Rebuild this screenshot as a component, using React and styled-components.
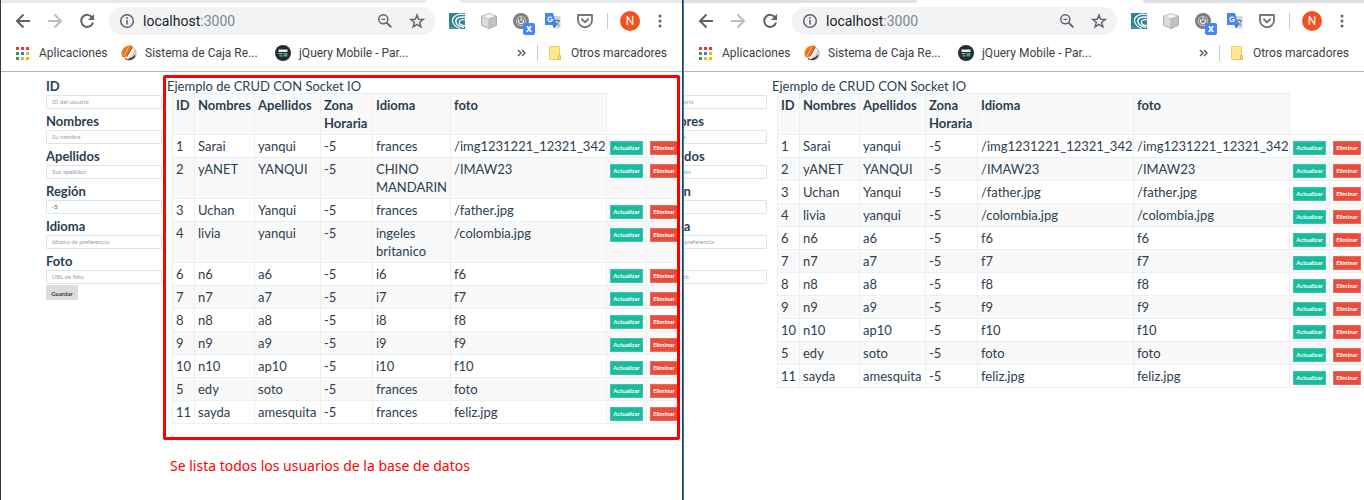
import React, { useId } from 'react';
import styled, { createGlobalStyle } from 'styled-components';

const GlobalStyle = createGlobalStyle`
  *, *::before, *::after { box-sizing: border-box; }
  body { margin: 0; background: #fff; overflow: hidden; }
  button, input { font: inherit; }
`;

const chromeFont = 'Roboto, "Noto Sans", sans-serif';

const Desktop = styled.div`
  display: grid;
  grid-template-columns: 50% 1px 1fr;
  min-height: 100vh;
`;
const Divider = styled.div`
  background: #33373c;
`;
const BrowserWindow = styled.section`
  min-width: 0;
  overflow: hidden;
  border-left: 1px solid ${(p) => p.$edge};
`;

/* Browser chrome */
const TabStrip = styled.div`
  display: flex;
  height: 3px;
`;
const Tabs = styled.div`
  flex: ${(p) => (p.$width ? `0 0 ${p.$width}px` : '1')};
  background: ${(p) => p.$color};
  border-radius: ${(p) => (p.$width ? '0 0 4px 0' : '0 0 0 4px')};
`;
const TabGap = styled.div`
  flex: 0 0 ${(p) => p.$width}px;
`;
const Toolbar = styled.div`
  display: flex;
  align-items: center;
  height: 36px;
  padding: 0 14px;
`;
const IconButton = styled.button`
  display: grid;
  place-items: center;
  position: relative;
  flex: none;
  width: 16px;
  height: 16px;
  padding: 0;
  border: 0;
  background: none;
  color: #5f6368;
  &:disabled { color: #bbbdbf; }
`;
const Navigation = styled.div`
  display: flex;
  gap: 16px;
  margin-right: 14px;
`;
const AddressBar = styled.div`
  display: flex;
  align-items: center;
  gap: 16px;
  flex: 1;
  min-width: 0;
  height: 28px;
  padding: 0 10px;
  border-radius: 14px;
  background: #f1f3f4;
`;
const Address = styled.div`
  flex: 1;
  margin-left: -8px;
  font: 14px/20px ${chromeFont};
  color: #202124;
  white-space: nowrap;
  span { color: #80868b; }
`;
const Extensions = styled.div`
  display: flex;
  align-items: center;
  gap: 16px;
  margin-left: 14px;
`;
const Badge = styled.span`
  position: absolute;
  left: 10px;
  top: 10px;
  width: 12px;
  height: 12px;
  border-radius: 2px;
  background: #4285f4;
  color: #fff;
  font: bold 10px/11px "Noto Sans", sans-serif;
  text-align: center;
`;
const Separator = styled.span`
  flex: none;
  width: 1px;
  height: 16px;
  background: #ccc;
`;
const Profile = styled.div`
  display: flex;
  align-items: center;
  gap: 12px;
  margin-left: 14px;
`;
const Avatar = styled.button`
  width: 20px;
  height: 20px;
  padding: 0;
  border: 0;
  border-radius: 50%;
  background: #f4511e;
  color: #fff;
  font: 12px/20px ${chromeFont};
  text-align: center;
`;
const BookmarksBar = styled.nav`
  display: flex;
  align-items: center;
  height: 33px;
  padding: 0 15px 4px;
  border-bottom: 1px solid #b4b4b4;
  font: 12px/18px ${chromeFont};
  color: #3c4043;
  white-space: nowrap;
`;
const Bookmark = styled.a`
  display: flex;
  align-items: center;
  flex: none;
  gap: 8px;
  width: ${(p) => (p.$width ? `${p.$width}px` : 'auto')};
  color: inherit;
  text-decoration: none;
  svg { flex: none; }
`;
const BookmarkEnd = styled.div`
  display: flex;
  align-items: center;
  gap: 11px;
  margin-left: auto;
`;

/* Page */
const Page = styled.main`
  display: flex;
  align-items: flex-start;
  padding-left: 45px;
  margin-left: ${(p) => -p.$scrolled}px;
  font: 13px/18px Lato, sans-serif;
  color: #2c3e50;
`;
const UserForm = styled.form`
  flex: none;
  width: 116px;
  padding-top: 5px;
`;
const Field = styled.div`
  margin-bottom: 3px;
  &:last-of-type { margin-bottom: 1px; }
`;
const Label = styled.label`
  display: block;
  font-weight: 700;
`;
const TextInput = styled.input`
  display: block;
  width: 100%;
  height: 14px;
  padding: 0 5px;
  border: 1px solid #dce4ec;
  border-radius: 1px;
  background: #fff;
  color: #2c3e50;
  font-size: 6px;
  &::placeholder { color: #95a1a9; opacity: 1; }
`;
const SaveButton = styled.button`
  display: block;
  width: 32px;
  height: 15px;
  padding: 0;
  border: 0;
  border-radius: 1px;
  background: #dcdcdc;
  color: #2c3e50;
  font-size: 6px;
  font-weight: 700;
`;
const ListColumn = styled.div`
  flex: 1;
  min-width: 0;
  margin-left: 1px;
`;
const ListPanel = styled.div`
  position: relative;
  padding: 7px 0 16px 9px;
`;
const Title = styled.div`
  margin-left: -5px;
  line-height: 14px;
  white-space: nowrap;
`;
const Highlight = styled.div`
  position: absolute;
  inset: 3px 2px 0 0;
  border: 3px solid #f00;
  border-radius: 2px;
  pointer-events: none;
`;
const Caption = styled.p`
  margin: 17px 0 0 7px;
  font: 14px/18px "Noto Sans", sans-serif;
  color: #f00;
  white-space: nowrap;
`;
const Table = styled.table`
  table-layout: fixed;
  width: ${(p) => p.$width}px;
  border-collapse: collapse;
  tbody tr:nth-child(even) { background: #f9f9f9; }
`;
const HeadCell = styled.th`
  padding: 2px 3px;
  border: 1px solid #ecf0f1;
  background: #f9f9f9;
  text-align: left;
  vertical-align: top;
  font-weight: 700;
`;
const Cell = styled.td`
  padding: 2px 3px;
  border: 1px solid #ecf0f1;
  vertical-align: top;
`;
const ActionCell = styled(Cell)`
  padding: 6px 3px 2px;
`;
const ActionButton = styled.button`
  display: block;
  width: 100%;
  height: 14px;
  padding: 0;
  border: 1px solid ${(p) => (p.$danger ? '#ee6a5d' : '#3cc6ab')};
  background: ${(p) => (p.$danger ? '#e74c3c' : '#18bc9c')};
  color: #fff;
  font-size: 6px;
  line-height: 10px;
  font-weight: 700;
`;

const BackIcon = () => (
  <svg width="16" height="16" viewBox="0 0 16 16" fill="none" stroke="currentColor" strokeWidth="2">
    <path d="M15 8H2.500M8.500 1.500 2 8l6.500 6.500" />
  </svg>
);
const ForwardIcon = () => (
  <svg width="16" height="16" viewBox="0 0 16 16" fill="none" stroke="currentColor" strokeWidth="2">
    <path d="M1 8h12.500M7.500 1.500 14 8l-6.500 6.500" />
  </svg>
);
const ReloadIcon = () => (
  <svg width="16" height="16" viewBox="0 0 16 16" fill="none" stroke="currentColor" strokeWidth="2">
    <path d="M13.200 4.500A6 6 0 1 0 14 9.500" />
    <path d="M15 1v6H9z" fill="currentColor" stroke="none" />
  </svg>
);
const InfoIcon = () => (
  <svg width="16" height="16" viewBox="0 0 16 16" fill="none" stroke="#5f6368">
    <circle cx="8" cy="8" r="6.300" strokeWidth="1.500" />
    <path d="M8 7v4.500M8 4.300v1.600" strokeWidth="1.600" />
  </svg>
);
const ZoomOutIcon = () => (
  <svg width="16" height="16" viewBox="0 0 16 16" fill="none" stroke="currentColor" strokeWidth="1.500">
    <circle cx="6.300" cy="6.300" r="4.500" />
    <path d="M9.600 9.600 14.300 14.300" strokeWidth="1.900" />
    <path d="M4.300 6.300h4" strokeWidth="1.200" />
  </svg>
);
const StarIcon = () => (
  <svg width="16" height="16" viewBox="0 0 16 16" fill="none" stroke="currentColor" strokeWidth="1.400">
    <path d="m8 1.900 1.600 4.300 4.700.2-3.700 2.900 1.300 4.500L8 11.300l-3.900 2.500 1.300-4.500-3.700-2.900 4.700-.2z" />
  </svg>
);
const SwirlIcon = () => (
  <svg width="16" height="16" viewBox="0 0 16 16">
    <rect width="16" height="16" fill="#2f8596" />
    <g fill="none" stroke="#fff">
      <path d="M16 1.500C9 .2 3 3.500 3.500 8c.4 3.600 3.500 6 7.500 7.500" strokeWidth="1.200" />
      <path d="M16 4.300C11 3 6.500 5 6.800 8.500c.3 3 4 5 8.200 6" strokeWidth="1.500" />
      <path d="M16 7c-3-.9-5.800.2-5.700 2.400.1 2 2.700 3.100 5.700 3.300" strokeWidth="1.200" />
      <path d="M0 14.500c3-1 3 .5 6 1" stroke="#77b2bd" strokeWidth=".8" />
    </g>
  </svg>
);
const CubeIcon = () => (
  <svg width="16" height="16" viewBox="0 0 16 16" strokeLinejoin="round" strokeWidth=".7">
    <path d="M8 .6 15.400 3.200v9L8 15.500.6 12.200v-9z" fill="#dcdcdc" stroke="#929292" />
    <path d="M8 .6 15.400 3.200 8 6 .6 3.200z" fill="#f4f4f4" stroke="#bbb" />
    <path d="M8 6 15.400 3.200v9L8 15.500z" fill="#c2c2c2" stroke="#aaa" />
  </svg>
);
const PowerIcon = () => (
  <svg width="16" height="16" viewBox="0 0 16 16">
    <circle cx="8" cy="8" r="8" fill="#7d7d7d" />
    <g fill="none" strokeWidth="1.200">
      <circle cx="8" cy="8" r="4.700" stroke="#bcbcbc" />
      <path d="M6.200 6.300a2.500 2.500 0 1 0 3.600 0M8 4.300v3.500" stroke="#f4f4f4" />
    </g>
  </svg>
);
const TranslateIcon = () => (
  <svg width="16" height="16" viewBox="0 0 16 16">
    <path d="M6 3h9.500v12.500H9z" fill="#d4d6d8" />
    <path d="M9.500 7.500H15M12.200 6v1.500M14 7.600c-.4 2.300-2 4-3.800 5M10.500 8.500c.8 2 2 3.200 4 4" fill="none" stroke="#607d8b" strokeWidth="1" />
    <path d="M0 0h8l3.500 12H0z" fill="#4285f4" />
    <path d="M7.500 12h4L9 15.500z" fill="#3367d6" />
    <path d="M7 4.800A2.300 2.300 0 1 0 7.500 6.600H5.300" fill="none" stroke="#fff" strokeWidth="1.100" />
  </svg>
);
const PocketIcon = () => (
  <svg width="16" height="16" viewBox="0 0 16 16" fill="none" stroke="#777" strokeWidth="1.900" strokeLinejoin="round" strokeLinecap="round">
    <path d="M1 2h14v5.200a7 7 0 0 1-14 0z" />
    <path d="M4.900 6.200 8 9.200l3.100-3" />
  </svg>
);
const MenuIcon = () => (
  <svg width="16" height="16" viewBox="0 0 16 16" fill="currentColor">
    <circle cx="8" cy="3" r="1.500" /><circle cx="8" cy="8" r="1.500" /><circle cx="8" cy="13" r="1.500" />
  </svg>
);
const AppsIcon = () => (
  <svg width="15" height="13" viewBox="0 0 15 13">
    <path d="M0 0h3v3H0zM5 0h3v3H5zM10 0h3v3h-3z" fill="#f1372d" />
    <path d="M0 5h3v3H0zM0 10h3v3H0z" fill="#2f9e57" />
    <path d="M5 5h3v3H5z" fill="#2a82f0" />
    <path d="M5 10h3v3H5zM10 5h3v3h-3zM10 10h3v3h-3z" fill="#fbb407" />
  </svg>
);
const CajaIcon = () => (
  <svg width="16" height="16" viewBox="0 0 16 16">
    <ellipse cx="9" cy="8.500" rx="6.800" ry="7" fill="#c9c5c2" />
    <path d="M3.500 13.500c3 3 9 1.800 11-2.500l-1-1c-2 3-6 4.500-9 3z" fill="#4a3a35" />
    <path d="M4 12.500 11 3l2.500 2L7 14.500z" fill="#fff" />
    <path d="M.5 8C1 3 5 0 10.500.5L12 2 6 11.500 2 12.500C1 11 .5 10 .5 8z" fill="#ee7418" />
    <path d="M3 11 7.500 2" stroke="#f9b27a" strokeWidth="1" />
    <path d="M6 11.500 11 2.500" stroke="#b9480c" strokeWidth="1" />
    <path d="M11.500 5.500 7.500 12l3-.5 3-5z" fill="#eceae8" />
  </svg>
);
const JQueryIcon = () => (
  <svg width="16" height="16" viewBox="0 0 16 16">
    <circle cx="8" cy="8" r="8" fill="#232b35" />
    <path d="M3.500 4.500h9V7h-9z" fill="#e8ecec" />
    <path d="M3.500 8h4v1.200h-4zM4.500 10.200h3v1.300h-3z" fill="#93a5a8" />
    <path d="M8.500 8h4v3.500h-4z" fill="#45a08c" />
  </svg>
);
const ChevronsIcon = () => (
  <svg width="9" height="8" viewBox="0 0 9 8" fill="none" stroke="#5f6368" strokeWidth="1.500">
    <path d="m1 1 3 3-3 3M5 1l3 3-3 3" />
  </svg>
);
const FolderIcon = () => (
  <svg width="14" height="14" viewBox="0 0 14 14">
    <path d="M.5.5h10v13H.5z" fill="#ffe793" stroke="#f0cf62" />
    <path d="M9.500 9.500h2v4h-2z" fill="#ffe793" stroke="#e3bd43" />
  </svg>
);

const extensions = [
  ['Swirl', SwirlIcon],
  ['Cubo', CubeIcon],
  ['Encendido', PowerIcon, 'x'],
  ['Traductor', TranslateIcon],
  ['Pocket', PocketIcon],
];

function BrowserChrome({ strip, before, gap }) {
  return (
    <header>
      <TabStrip>
        <Tabs $width={before} $color={strip} />
        <TabGap $width={gap} />
        <Tabs $color={strip} />
      </TabStrip>
      <Toolbar>
        <Navigation>
          <IconButton type="button" aria-label="Atrás"><BackIcon /></IconButton>
          <IconButton type="button" aria-label="Adelante" disabled><ForwardIcon /></IconButton>
          <IconButton type="button" aria-label="Recargar"><ReloadIcon /></IconButton>
        </Navigation>
        <AddressBar>
          <InfoIcon />
          <Address>localhost<span>:3000</span></Address>
          <IconButton type="button" aria-label="Alejar"><ZoomOutIcon /></IconButton>
          <IconButton type="button" aria-label="Marcar"><StarIcon /></IconButton>
        </AddressBar>
        <Extensions>
          {extensions.map(([name, Icon, badge]) => (
            <IconButton type="button" key={name} aria-label={name}>
              <Icon />
              {badge && <Badge>{badge}</Badge>}
            </IconButton>
          ))}
        </Extensions>
        <Profile>
          <Separator />
          <Avatar type="button">N</Avatar>
          <IconButton type="button" aria-label="Menú"><MenuIcon /></IconButton>
        </Profile>
      </Toolbar>
      <BookmarksBar>
        <Bookmark href="#apps" $width={105}><AppsIcon />Aplicaciones</Bookmark>
        <Bookmark href="#caja" $width={154}><CajaIcon />Sistema de Caja Re...</Bookmark>
        <Bookmark href="#jquery"><JQueryIcon />jQuery Mobile - Par...</Bookmark>
        <BookmarkEnd>
          <ChevronsIcon />
          <Separator />
          <Bookmark href="#otros"><FolderIcon />Otros marcadores</Bookmark>
        </BookmarkEnd>
      </BookmarksBar>
    </header>
  );
}

const fields = [
  { label: 'ID', placeholder: 'ID del usuario' },
  { label: 'Nombres', placeholder: 'Su nombre' },
  { label: 'Apellidos', placeholder: 'Sus apellidos' },
  { label: 'Región', value: '-5' },
  { label: 'Idioma', placeholder: 'Idioma de preferencia' },
  { label: 'Foto', placeholder: 'URL de foto' },
];
const headings = ['ID', 'Nombres', 'Apellidos', 'Zona Horaria', 'Idioma', 'foto'];

const users = [
  ['1', 'Sarai', 'yanqui', 'frances', '/img1231221_12321_342'],
  ['2', 'yANET', 'YANQUI', 'CHINO MANDARIN', '/IMAW23'],
  ['3', 'Uchan', 'Yanqui', 'frances', '/father.jpg'],
  ['4', 'livia', 'yanqui', 'ingeles britanico', '/colombia.jpg'],
  ['6', 'n6', 'a6', 'i6', 'f6'],
  ['7', 'n7', 'a7', 'i7', 'f7'],
  ['8', 'n8', 'a8', 'i8', 'f8'],
  ['9', 'n9', 'a9', 'i9', 'f9'],
  ['10', 'n10', 'ap10', 'i10', 'f10'],
  ['5', 'edy', 'soto', 'frances', 'foto'],
  ['11', 'sayda', 'amesquita', 'frances', 'feliz.jpg'],
];

function UserTable({ languageWidth, photoAsLanguage }) {
  const columns = [22, 60, 66, 52, languageWidth, 156, 40, 35];
  const total = columns.reduce((sum, width) => sum + width, 1);
  return (
    <Table $width={total}>
      <colgroup>
        {columns.map((width, i) => <col key={i} width={width} />)}
      </colgroup>
      <thead>
        <tr>{headings.map((h) => <HeadCell key={h} scope="col">{h}</HeadCell>)}</tr>
      </thead>
      <tbody>
        {users.map(([id, name, surname, language, photo]) => (
          <tr key={id}>
            <Cell>{id}</Cell>
            <Cell>{name}</Cell>
            <Cell>{surname}</Cell>
            <Cell>-5</Cell>
            <Cell>{photoAsLanguage ? photo : language}</Cell>
            <Cell>{photo}</Cell>
            <ActionCell><ActionButton type="button">Actualizar</ActionButton></ActionCell>
            <ActionCell><ActionButton type="button" $danger>Eliminar</ActionButton></ActionCell>
          </tr>
        ))}
      </tbody>
    </Table>
  );
}

function CrudPage({ scrolled = 0, languageWidth, photoAsLanguage, highlighted, caption }) {
  const formId = useId();
  return (
    <Page $scrolled={scrolled}>
      <UserForm>
        {fields.map(({ label, placeholder, value }) => (
          <Field key={label}>
            <Label htmlFor={formId + label}>{label}</Label>
            <TextInput id={formId + label} placeholder={placeholder} defaultValue={value} />
          </Field>
        ))}
        <SaveButton type="button">Guardar</SaveButton>
      </UserForm>
      <ListColumn>
        <ListPanel>
          <Title>Ejemplo de CRUD CON Socket IO</Title>
          <UserTable languageWidth={languageWidth} photoAsLanguage={photoAsLanguage} />
          {highlighted && <Highlight />}
        </ListPanel>
        {caption && <Caption>{caption}</Caption>}
      </ListColumn>
    </Page>
  );
}

export default function App() {
  return (
    <>
      <GlobalStyle />
      <Desktop>
        <BrowserWindow $edge="#33373c">
          <BrowserChrome strip="#e7eaed" before={425} gap={34} />
          <CrudPage
            languageWidth={78}
            highlighted
            caption="Se lista todos los usuarios de la base de datos"
          />
        </BrowserWindow>
        <Divider />
        <BrowserWindow $edge="#2f7fb8">
          <BrowserChrome strip="#dee1e6" before={233} gap={226} />
          <CrudPage scrolled={78} languageWidth={156} photoAsLanguage />
        </BrowserWindow>
      </Desktop>
    </>
  );
}
